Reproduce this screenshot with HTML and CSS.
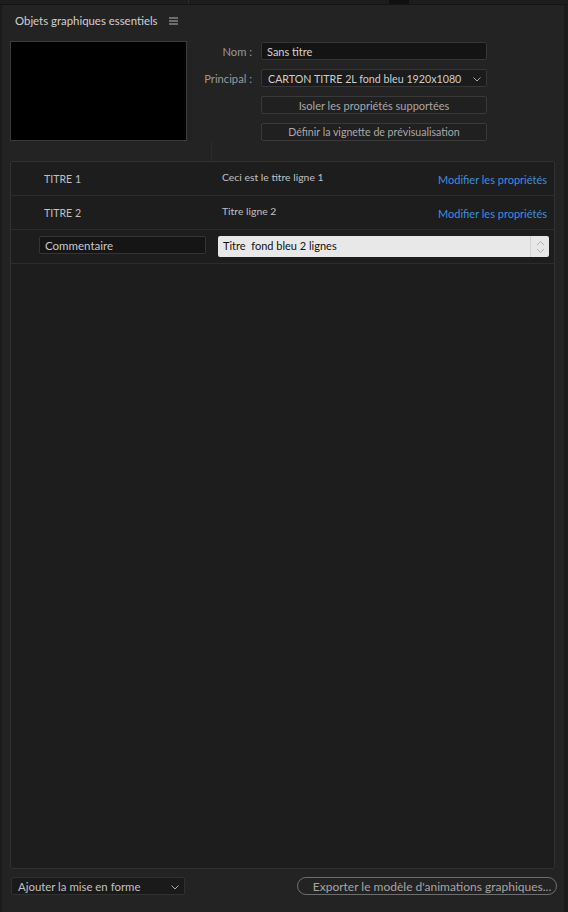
FILE: index.html
```html
<!DOCTYPE html>
<html lang="fr">
<head>
<meta charset="utf-8">
<title>Objets graphiques essentiels</title>
<link rel="stylesheet" href="styles.css">
</head>
<body>
<div class="topstrip">
  <span class="tab t1"></span><span class="tab t2"></span><span class="tab t3"></span>
</div>
<div class="panel">
  <div class="header">
    <span class="title">Objets graphiques essentiels</span>
    <svg class="menu" width="9" height="8" viewBox="0 0 9 8"><path d="M0 1h9M0 4h9M0 7h9" stroke="#b8b8b8" stroke-width="1"/></svg>
  </div>
  <div class="top">
    <div class="thumb"></div>
    <div class="form">
      <span class="label">Nom :</span>
      <div class="input">Sans titre</div>
      <span class="label">Principal :</span>
      <div class="select">CARTON TITRE 2L fond bleu 1920x1080
        <svg class="chev" width="8" height="5" viewBox="0 0 8 5"><path d="M0.5 0.5L4 4L7.5 0.5" fill="none" stroke="#a8a8a8" stroke-width="1"/></svg>
      </div>
      <span></span>
      <div class="btn">Isoler les propriétés supportées</div>
      <span></span>
      <div class="btn">Définir la vignette de prévisualisation</div>
    </div>
  </div>
  <div class="splitter"></div>
  <div class="list">
    <div class="row">
      <span class="c1">TITRE 1</span>
      <span class="c2">Ceci est le titre ligne 1</span>
      <span class="link">Modifier les propriétés</span>
    </div>
    <div class="row">
      <span class="c1">TITRE 2</span>
      <span class="c2">Titre ligne 2</span>
      <span class="link">Modifier les propriétés</span>
    </div>
    <div class="row row3">
      <div class="comment">Commentaire</div>
      <div class="textfield">Titre&nbsp; fond bleu 2 lignes
        <div class="spin">
          <svg width="9" height="14" viewBox="0 0 9 14"><path d="M1 5L4.5 1.5L8 5M1 9L4.5 12.5L8 9" fill="none" stroke="#b0b0b0" stroke-width="1"/></svg>
        </div>
      </div>
    </div>
  </div>
  <div class="bottom">
    <div class="select small">Ajouter la mise en forme
      <svg class="chev" width="8" height="5" viewBox="0 0 8 5"><path d="M0.5 0.5L4 4L7.5 0.5" fill="none" stroke="#a8a8a8" stroke-width="1"/></svg>
    </div>
    <div class="export">Exporter le modèle d'animations graphiques...</div>
  </div>
</div>
</body>
</html>
```
FILE: styles.css
```css
html, body {
  margin: 0;
  padding: 0;
  background: #1b1b1b;
  width: 568px;
  height: 912px;
  overflow: hidden;
  font-family: Lato, "Open Sans", sans-serif;
  font-size: 11px;
  color: #c4c4c4;
}
.topstrip {
  height: 4px;
  background: #1d1d1d;
  border-bottom: 1px solid #141414;
  display: flex;
}
.tab { height: 4px; display: block; }
.t1 { width: 188px; border-right: 1px solid #2c2c2c; }
.t2 { width: 200px; }
.t3 { width: 20px; background: #101010; }
.panel {
  margin-left: 2px;
  width: 562px;
  height: 907px;
  background: #232323;
  border-right: 1px solid #1a1a1a;
  display: flex;
  flex-direction: column;
}
.header {
  height: 30px;
  display: flex;
  align-items: center;
  padding-left: 13px;
  gap: 11px;
}
.title { color: #d0d0d0; font-size: 11.4px; }
.menu { display: block; margin-top: 1px; }
.top {
  display: flex;
  padding-left: 8px;
  margin-top: 6px;
}
.thumb {
  width: 175px;
  height: 98px;
  background: #000;
  border: 1px solid #3a3a3a;
}
.form {
  display: grid;
  grid-template-columns: 65px 226px;
  column-gap: 9px;
  row-gap: 9px;
  margin-top: 1px;
  align-items: center;
}
.label {
  text-align: right;
  color: #9a9a9a;
  font-size: 11.2px;
}
.input, .select, .btn {
  height: 16px;
  box-sizing: content-box;
  border: 1px solid #363636;
  border-radius: 2px;
  display: flex;
  align-items: center;
  font-size: 11px;
  position: relative;
}
.input { background: #141414; padding-left: 5px; color: #d4d4d4; }
.select { background: #1b1b1b; padding-left: 6px; color: #cdcdcd; font-size: 10.7px; }
.chev { position: absolute; right: 5px; top: 7px; }
.btn {
  background: #202020;
  border-color: #393939;
  justify-content: center;
  color: #a8a8a8;
}
.btn + span + .btn { font-size: 10.6px; }
.splitter {
  margin-left: 209px;
  width: 1px;
  height: 20px;
  background: #2b2b2b;
}
.list {
  margin-left: 8px;
  width: 543px;
  height: 706px;
  background: #1d1d1d;
  border: 1px solid #313131;
  border-radius: 2px;
}
.row {
  height: 33px;
  border-bottom: 1px solid #2c2c2c;
  display: flex;
  align-items: center;
}
.c1 { width: 178px; padding-left: 33px; color: #c0c0c0; font-size: 10.6px; }
.c2 { color: #c0c0c0; font-size: 10.4px; margin-top: -3px; }
.link {
  margin-left: auto;
  margin-right: 7px;
  color: #3d8ee0;
  font-size: 11px;
  margin-top: 1px;
}
.row3 { align-items: flex-start; }
.comment {
  margin-top: 6px;
  margin-left: 28px;
  width: 160px;
  height: 16px;
  padding-left: 5px;
  background: #151515;
  border: 1px solid #343434;
  border-radius: 2px;
  display: flex;
  align-items: center;
  color: #c8c8c8;
  font-size: 11.5px;
}
.textfield {
  margin-top: 6px;
  margin-left: 12px;
  width: 326px;
  height: 21px;
  padding-left: 5px;
  background: #e8e8e8;
  border-radius: 2px;
  color: #111;
  font-size: 11px;
  line-height: 19px;
  position: relative;
}
.spin {
  position: absolute;
  right: 0;
  top: 0;
  width: 18px;
  height: 21px;
  border-left: 1px solid #d2d2d2;
  display: flex;
  align-items: center;
  justify-content: center;
}
.spin svg { display: block; }
.bottom {
  display: flex;
  justify-content: space-between;
  padding: 8px 7px 0 9px;
}
.select.small {
  width: 166px;
  background: #1a1a1a;
  border-color: #303030;
  color: #c0c0c0;
  font-size: 11.4px;
}
.export {
  width: 248px;
  height: 16px;
  padding-left: 10px;
  border: 1px solid #6e6e6e;
  border-radius: 9px;
  display: flex;
  align-items: center;
  justify-content: center;
  color: #a4a4a4;
  font-size: 12px;
}
```
